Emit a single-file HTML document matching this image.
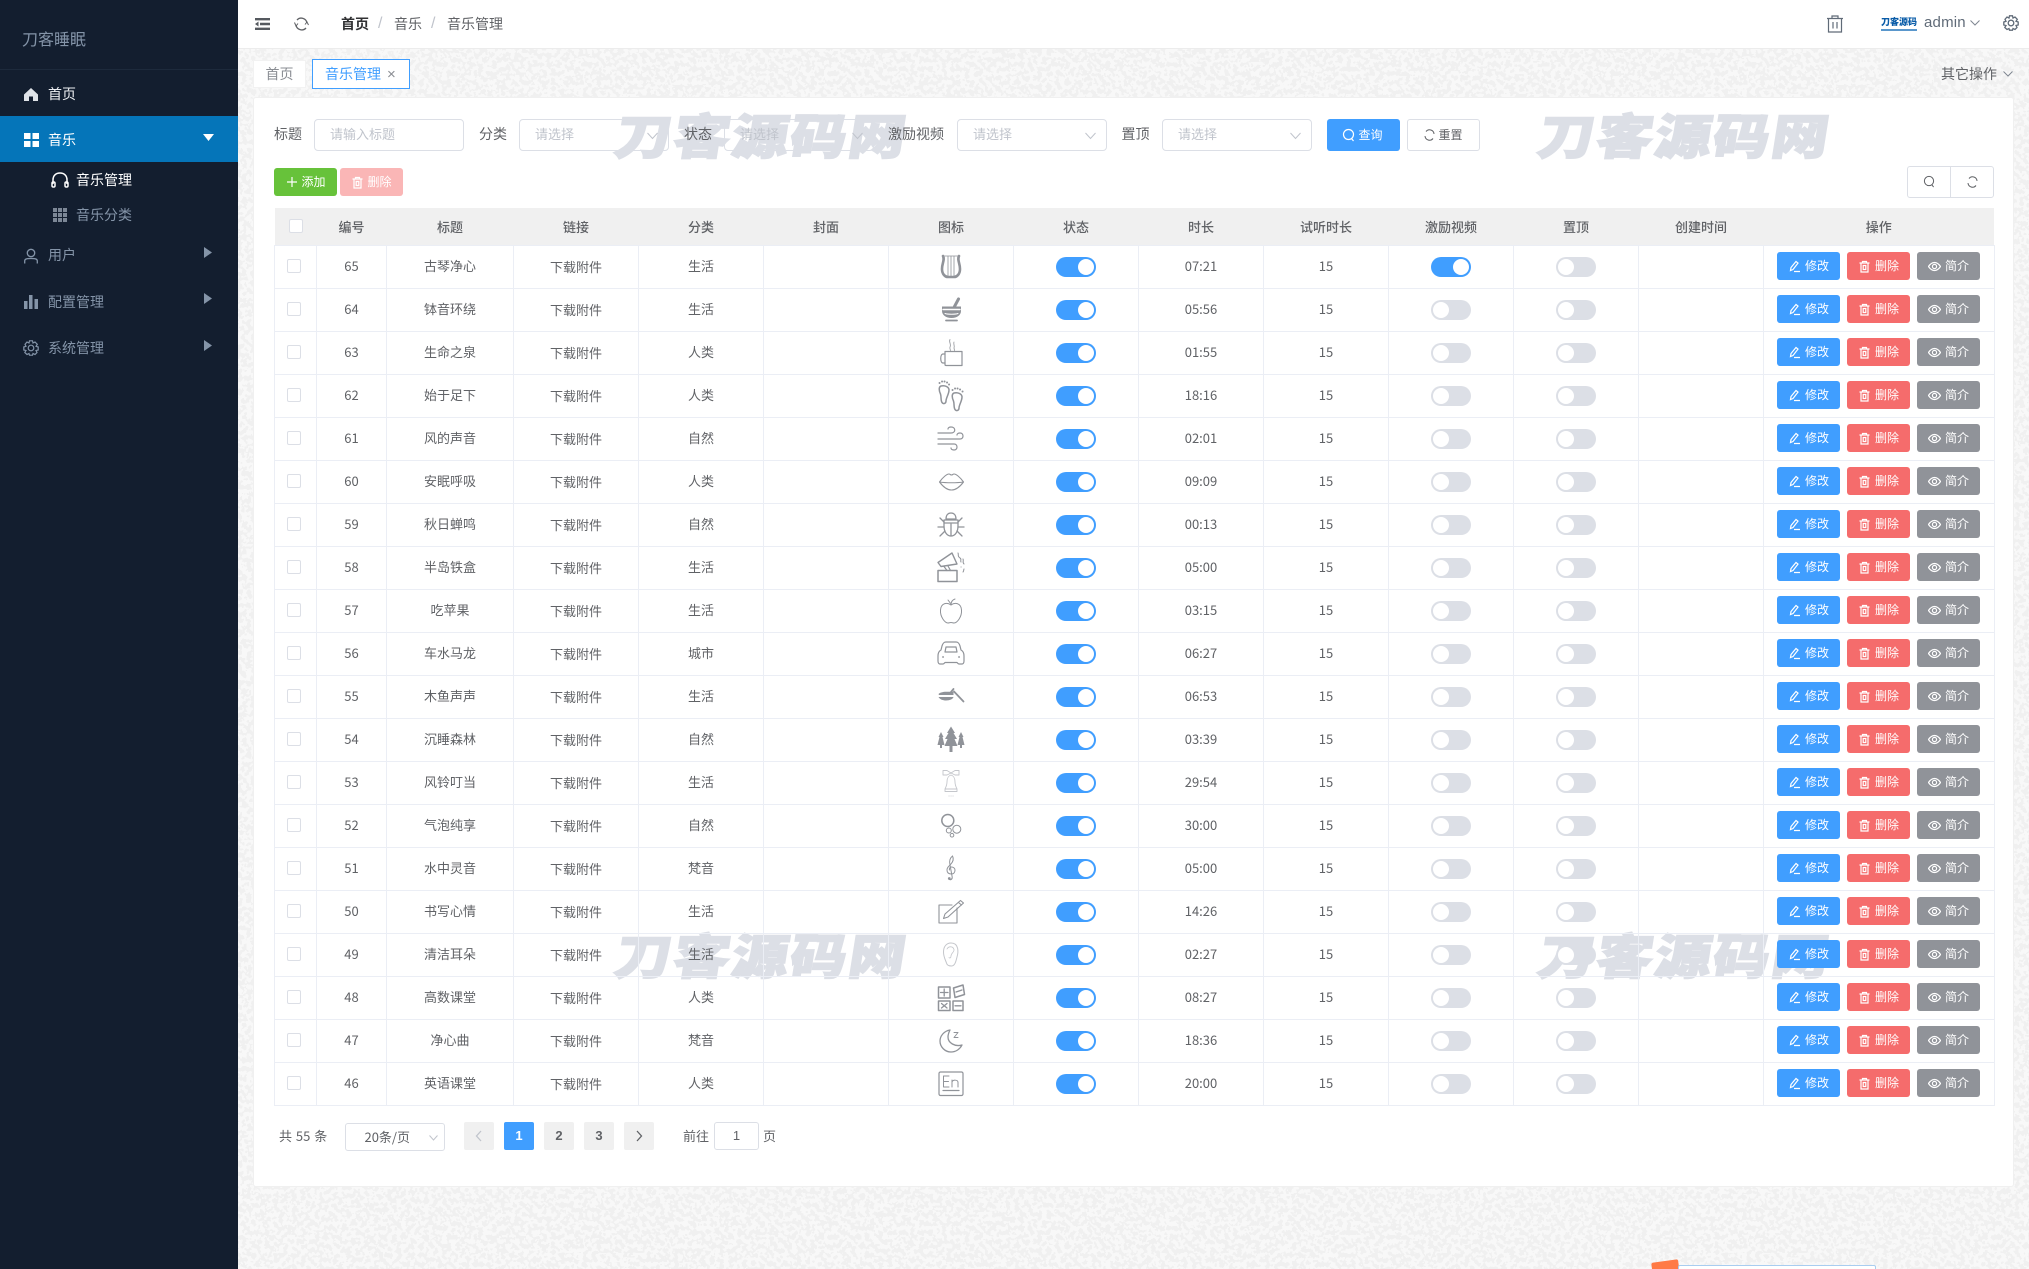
<!DOCTYPE html>
<html lang="zh-CN">
<head>
<meta charset="utf-8">
<title>刀客睡眠</title>
<style>
*{box-sizing:border-box}
html,body{margin:0;padding:0;width:2029px;height:1269px;overflow:hidden;background:#f6f6f6;font-family:"Liberation Sans","Noto Sans CJK SC",sans-serif;color:#606266}
symbol{overflow:visible}
#wrap{position:absolute;left:0;top:0;width:2029px;height:1269px;overflow:hidden}
.a{position:absolute}
#noise{position:absolute;left:238px;top:49px;width:1791px;height:1220px}
#side{position:absolute;left:0;top:0;width:238px;height:1269px;background:#131e2f;color:#8494a8;font-size:14px}
#side .t{position:absolute;white-space:nowrap;line-height:20px}
#side svg{position:absolute}
#top{position:absolute;left:238px;top:0;width:1791px;height:49px;background:#fff;border-bottom:1px solid #ececec}
.cr{position:absolute;top:14px;font-size:14px;line-height:20px;white-space:nowrap;color:#606266}
#tab1{position:absolute;left:253px;top:60px;width:53px;height:28px;background:#fff;border:1px solid #f2f2f2;font-size:14px;line-height:27px;text-align:center;color:#8a8d93}
#tab2{position:absolute;left:312px;top:59px;width:98px;height:30px;background:#fff;border:1px solid #409eff;font-size:14px;line-height:29px;padding-left:12px;color:#409eff;white-space:nowrap}
#card{position:absolute;left:253px;top:97px;width:1761px;height:1090px;background:#fff;border:1px solid #f0f0f0;border-radius:3px}
.wm{position:absolute;width:300px;height:56px;font-family:"Noto Sans CJK SC",sans-serif;font-weight:900;font-size:48px;line-height:56px;letter-spacing:1.500px;color:#dcdfe6;-webkit-text-stroke:1.500px #dcdfe6;transform-origin:0 50%;transform:skewX(-9deg) scaleX(1.18);white-space:nowrap}
.lb{position:absolute;top:124px;font-size:14px;line-height:20px;white-space:nowrap;color:#606266}
.inp{position:absolute;top:119px;height:32px;width:149.500px;background:transparent;border:1px solid #dcdfe6;border-radius:4px;font-size:13px;line-height:30px;padding-left:15px;color:#c0c4cc;white-space:nowrap}
.inp svg{position:absolute;right:10px;top:10px}
.btn{position:absolute;font-size:12px;border-radius:3px;white-space:nowrap;text-align:center}
table{position:absolute;left:274px;top:208px;width:1719.500px;border-collapse:collapse;table-layout:fixed;font-family:"Noto Sans CJK SC","Liberation Sans",sans-serif;font-size:13px;color:#606266}
th{height:37px;padding:0;background:#f0f0f0;font-weight:500;font-size:13px;color:#606266;text-align:center}
td{height:43px;padding:0 0 2px;border:1px solid #ebeef5;text-align:center;line-height:20px}
td>i,td>svg,.o div{position:relative;top:1px}
.c{display:block;width:14px;height:14px;margin-left:12px;margin-top:-1px;border:1px solid #dcdfe6;border-radius:2px;background:#fff}
.d{padding-top:2px}
.s{display:block;position:relative;width:40px;height:20px;margin:1px auto 0;border-radius:10px;background:#dcdfe6}
.s:after{content:"";position:absolute;left:2px;top:2px;width:16px;height:16px;border-radius:50%;background:#fff}
.s.on{background:#409eff}
.s.on:after{left:22px}
.ic{display:block;width:28px;height:28px;margin:0 auto;overflow:visible;fill:none;stroke:#909399;stroke-width:1.200;stroke-linecap:round;stroke-linejoin:round}
.o{padding-left:13px}
.o div{display:flex;gap:7px;margin-top:-1px}
.o a{display:flex;align-items:center;justify-content:center;gap:4px;width:63px;height:28px;border-radius:3px;color:#fff;font-size:12px;white-space:nowrap}
.o svg{width:13px;height:13px;fill:none;stroke:#fff;stroke-width:1.200}
.bl{background:#409eff}.rd{background:#f56c6c}.gy{background:#909399}
.pg{position:absolute;top:1122px;width:30px;height:28px;background:#f0f0f0;border-radius:2px;font-size:13px;font-weight:700;line-height:28px;text-align:center;color:#606266}
.nt{font-family:"Noto Sans CJK SC","Liberation Sans",sans-serif}
</style>
</head>
<body>
<div id="wrap">

<svg id="noise" viewBox="0 0 1791 1220" preserveAspectRatio="none">
<filter id="nf" x="0" y="0" width="100%" height="100%" color-interpolation-filters="sRGB">
<feTurbulence type="fractalNoise" baseFrequency="0.22" numOctaves="2" seed="7"/>
<feColorMatrix values="1 0 0 0 0 1 0 0 0 0 1 0 0 0 0 0 0 0 0 1"/>
<feComponentTransfer><feFuncR type="discrete" tableValues="0.945 0.945 0.976 0.976"/><feFuncG type="discrete" tableValues="0.945 0.945 0.976 0.976"/><feFuncB type="discrete" tableValues="0.945 0.945 0.976 0.976"/></feComponentTransfer>
</filter>
<rect width="1791" height="1220" filter="url(#nf)"/>
</svg>

<svg width="0" height="0" style="position:absolute">
<defs>
<symbol id="e" viewBox="0 0 13 13"><path d="M2.500 10.500l.5-3L8 1.500l2 1.600L5 9.500zM6 11.500h6"/></symbol>
<symbol id="x" viewBox="0 0 13 13"><path d="M1.500 3h10M4.500 3V1.500h4V3M3 3v9h7V3M5.200 5.500v4h2.600v-4z"/></symbol>
<symbol id="v" viewBox="0 0 13 13"><path d="M.5 6.500C2.500 3.500 4.500 2.500 6.500 2.500S10.500 3.500 12.500 6.500C10.500 9.500 8.500 10.500 6.500 10.500S2.500 9.500.5 6.500z"/><circle cx="6.500" cy="6.500" r="2.100"/></symbol>
<symbol id="i1" viewBox="0 0 28 28"><path d="M6 3C8 7 5 10 5 16C5 21 8 24 11 24H17C20 24 23 21 23 16C23 10 20 7 22 3" stroke-width="2.600"/><path d="M6 3H22M11 3V23M14 3V23M17 3V23" stroke-width=".8"/></symbol>
<symbol id="i2" viewBox="0 0 28 28"><path d="M21.500 3L17.500 10.500" stroke-width="3"/><path d="M5 10.500H24V15C24 19 20 22 14.500 22C9 22 5 19 5 15Z" fill="#909399" stroke="none"/><path d="M6 13.500H23" stroke="#fff" stroke-width="1.500"/><path d="M8 17.500C11 18.500 18 18.500 21 17.500" stroke="#fff" stroke-width="1"/><path d="M9 24.500H20" stroke-width="1.800"/></symbol>
<symbol id="i3" viewBox="0 0 28 28"><path d="M8 12.500H25V26.500H9C8.500 26.500 8 26 8 25.500Z"/><path d="M8 15H6C3 15 3 24 6 24H8"/><path d="M13 0.500C11.500 3 14.500 5 13 8C12.500 9 13 10 13.500 11.500M17 3C16 5 18 6.500 17 9L17.500 11.500" stroke-width=".8"/></symbol>
<symbol id="i4" viewBox="0 0 28 28"><path d="M4 4C1.500 5 2 9 3.500 12C4.500 15 3.500 18 5 20.500C6.500 22.500 9 21.500 9 19C9 16 12 12 12 8C12 5 8 3 4 4Z" stroke-width="1.500"/><path d="M17 11C14.500 12 15 16 16.500 19C17.500 22 16.500 25 18 27.500C19.500 29.500 22 28.500 22 26C22 23 25 19 25 15C25 12 21 10 17 11Z" stroke-width="1.500"/><path d="M2.500 1h.1M5 -.5h.1M7.500 -.5h.1M10 .5h.1M12 2.500h.1M15.500 8h.1M18 6.500h.1M20.500 6.500h.1M23 7.500h.1M25.500 9.500h.1" stroke-width="1.900"/></symbol>
<symbol id="i5" viewBox="0 0 28 28"><path d="M1 8H14C19 8 19 2 14 2C12 2 11 3 11 4"/><path d="M1 14H23C27 14 27 8 23 8C21 8 20 9 20 10"/><path d="M1 19H17C21 19 21 25 17 25C15 25 14 24 14 23"/></symbol>
<symbol id="i6" viewBox="0 0 28 28"><path d="M2.500 14C6 9 10 6 12 6C13 6 13.500 7 14.500 7C15.500 7 16 6 17 6C19 6 23 9 26.500 14C22 20 18 22 14.500 22C11 22 7 20 2.500 14Z" stroke-width="1.100"/><path d="M2.500 14C9 15 20 15 26.500 14" stroke-width="1.100"/></symbol>
<symbol id="i7" viewBox="0 0 28 28"><path d="M9 8C9 4 11 2 14 2C17 2 19 4 19 8Z" stroke-width="1.300"/><path d="M7 9H21V15C21 21 18 25 14 25C10 25 7 21 7 15Z" stroke-width="1.300"/><path d="M14 13V25M7 12H21M7 11L3 7M21 11L25 7M7 16H1M21 16H27M8 20L3 25M20 20L25 25" stroke-width="1.300"/></symbol>
<symbol id="i8" viewBox="0 0 28 28"><path d="M1 16.500H20V27.500H1Z" stroke-width="1.500"/><path d="M1 8.500L15 -1L20 10L4 12.500Z" stroke-width="1.400"/><path d="M7 12.500L10 16.500M11 12L13.500 16.500" stroke-width="1.200"/><path d="M21 -1C22 1 20 2 23 4C25 5 23 7 24 8M26 5C27 7 25 8 27 10M24 13h.1M27 15C26.500 16 27 17 26 18" stroke-width="1"/></symbol>
<symbol id="i9" viewBox="0 0 28 28"><path d="M14 8C10 5 4 6 3.500 13C3 20 8 26 11 26C12 26 13 25.500 14 25.500C15 25.500 16 26 17 26C20 26 25 20 24.500 13C24 6 18 5 14 8Z" stroke-width="1"/><path d="M14 8C14 5 15 3 18 2M11 3L14 7" stroke-width="1"/></symbol>
<symbol id="i10" viewBox="0 0 28 28"><path d="M9 2H19C21 2 22 3 23 6L24 10C26 11 27 13 27 16V21C27 23 26 24 25 24H22C21 24 20.500 23 20 22.500H8C7.500 23 7 24 6 24H3C2 24 1 23 1 21V16C1 13 2 11 4 10L5 6C6 3 7 2 9 2Z" stroke-width="1.200"/><path d="M8 12L9 7H19L20 12Z" stroke-width="1.200"/><path d="M6 17h.1M22 17h.1" stroke-width="1.800"/></symbol>
<symbol id="i11" viewBox="0 0 28 28"><path d="M1.500 11C3 9.500 6 8.700 9 8.700H16.500V12H2ZM2 14H16.500C16 16 13 17.500 9 17.500C6 17.500 3 16.500 1.500 14Z" fill="#909399" stroke="none"/><path d="M17 8.500L26.500 18.500" stroke-width="1.800"/><path d="M14 9L16.500 6" stroke-width="1.800"/></symbol>
<symbol id="i12" viewBox="0 0 28 28"><path d="M14 .5L18 7H16.500L20 13H17.500L20.500 20H15.500V26H12.500V20H7.500L10.500 13H8L11.500 7H10ZM4 6L6.500 11H5.500L7.500 19H5V22H3V19H.5L2.500 11H1.500ZM24 6L26.500 11H25.500L27.500 19H25V22H23V19H20.500L22.500 11H21.500Z" fill="#909399" stroke="none"/></symbol>
<symbol id="i13" viewBox="0 0 28 28"><path d="M14 4L10 1.500H6V6H10ZM14 4L18 1.500H22V6H18ZM14 6C11 7 10 9 10 13C10 16 9 18 8 20H20C19 18 18 16 18 13C18 9 17 7 14 6ZM8 20V22.500H20V20M12 27h.1M14 27h.1M16 27h.1" stroke="#c4c6cb" stroke-width=".9"/></symbol>
<symbol id="i14" viewBox="0 0 28 28"><circle cx="10.800" cy="8.500" r="6" stroke-width="1.500"/><circle cx="19.800" cy="17.200" r="4" stroke-width="1"/><circle cx="11.800" cy="18.500" r="2.500" stroke-width="1"/><circle cx="15" cy="23.200" r="1.800" stroke-width="1"/></symbol>
<symbol id="i15" viewBox="0 0 28 28"><path d="M15.500 1C13 3 12 6 13 10L15.200 22C15.500 24.500 13 25.500 12 24" stroke-width="1"/><path d="M15.500 1C17 4 16 7 13.500 9.500C11 12 10 13 10 15C10 18 12 19 14.500 19C17 19 18 17 18 15C18 13 16 12 14.500 12C13 12 12 13.500 12.500 15" stroke-width="1"/><circle cx="12.300" cy="23.500" r="1.400" fill="#909399" stroke="none"/></symbol>
<symbol id="i16" viewBox="0 0 28 28"><path d="M20 10V25H2V7H15" stroke-width="1.100"/><path d="M23.500 2.500L26.500 5L11 19L6.500 20.500L8 16ZM21.500 4.500L24.500 7" stroke-width="1.100"/></symbol>
<symbol id="i17" viewBox="0 0 28 28"><path d="M14 2C9 2 6.500 6 6.500 11C6.500 16 8.500 19 9.500 22C10 24.500 12.500 25 14.500 25C18 25 19 20 20 16C21.500 11 22 2 14 2Z" stroke="#c4c6cb" stroke-width="1"/><path d="M10 8C11.500 5 16 5 17 8.500C17.500 11 14 12 14 15C14 17 12.500 17.500 12 16.500" stroke="#c4c6cb" stroke-width=".8"/></symbol>
<symbol id="i18" viewBox="0 0 28 28"><path d="M1.500 3H13V14H1.500ZM1.500 17H13V26.500H1.500ZM16 17H26V26.500H16ZM16.500 4L26 1L27.500 10.500L18 13.500Z" stroke-width="1.500"/><path d="M7.200 5V12M3.500 8.500H11M19 8L25 6M4.500 19.500L10 24M10 19.500L4.500 24M18 21.800H24" stroke-width="1.300"/></symbol>
<symbol id="i19" viewBox="0 0 28 28"><path d="M13 3C7 4 3 9 3 14C3 20 8 25 14 25C19 25 23 22 25 18C18 20 11 16 11 10C11 7 12 5 13 3Z" stroke-width="1.300"/><path d="M17 5.500H21L17 10.500H21" stroke-width="1"/></symbol>
<symbol id="i20" viewBox="0 0 28 28"><rect x="2" y="2" width="24" height="23.500" rx="1.500" stroke-width="1.200"/><path d="M6 20.500H22" stroke-width="1.200"/><path d="M12 6H6.500V17H12M6.500 11.500H11.500M15 17V10M15 12C16 9.500 21 9.500 21 12.500V17" stroke-width="1"/></symbol>
</defs>
</svg>

<div id="side">
<div class="t" style="left:22px;top:30px;font-size:16px;line-height:22px">刀客睡眠</div>
<div class="a" style="left:0;top:69px;width:238px;height:1px;background:#1d2a3c"></div>
<svg style="left:24px;top:88px" width="14" height="13" viewBox="0 0 14 13"><path d="M7 0L14 6.500V13H9V8.500H5V13H0V6.500Z" fill="#dfe3e8"/></svg>
<div class="t" style="left:48px;top:84px;color:#eef0f3">首页</div>
<div class="a" style="left:0;top:116px;width:238px;height:46px;background:#0575b9"></div>
<svg style="left:24px;top:133px" width="15" height="14" viewBox="0 0 15 14"><path d="M0 0H6.500V6H0ZM8.500 0H15V6H8.500ZM0 8H6.500V14H0ZM8.500 8H15V14H8.500Z" fill="#fff"/></svg>
<div class="t" style="left:48px;top:130px;color:#fff">音乐</div>
<svg style="left:203px;top:134px" width="11" height="7" viewBox="0 0 11 7"><path d="M0 0H11L5.500 7Z" fill="#fff"/></svg>
<svg style="left:51px;top:172px" width="18" height="16" viewBox="0 0 18 16" fill="none" stroke="#fff" stroke-width="1.500"><path d="M2 12V8C2 3.500 5 1 9 1S16 3.500 16 8V12"/><rect x="1" y="10" width="3" height="5" rx="1.300"/><rect x="14" y="10" width="3" height="5" rx="1.300"/></svg>
<div class="t" style="left:76px;top:170px;color:#fff">音乐管理</div>
<svg style="left:53px;top:208px" width="14" height="14" viewBox="0 0 14 14" fill="#7c8796"><path d="M0 0h4v4H0zM5 0h4v4H5zM10 0h4v4h-4zM0 5h4v4H0zM5 5h4v4H5zM10 5h4v4h-4zM0 10h4v4H0zM5 10h4v4H5zM10 10h4v4h-4z"/></svg>
<div class="t" style="left:76px;top:205px">音乐分类</div>
<svg style="left:24px;top:248px" width="14" height="16" viewBox="0 0 14 16" fill="none" stroke="#8494a8" stroke-width="1.300"><circle cx="7" cy="5" r="3.700"/><path d="M.7 15.500V13C.7 11 2.500 10.500 7 10.500S13.300 11 13.300 13V15.500"/></svg>
<div class="t" style="left:48px;top:245px">用户</div>
<svg style="left:204px;top:247px" width="8" height="11" viewBox="0 0 8 11"><path d="M0 0L8 5.500L0 11Z" fill="#8494a8"/></svg>
<svg style="left:24px;top:295px" width="14" height="14" viewBox="0 0 14 14" fill="#8494a8"><path d="M0 6h3.500v8H0zM5 0h3.500v14H5zM10.500 4H14v10h-3.500z"/></svg>
<div class="t" style="left:48px;top:292px">配置管理</div>
<svg style="left:204px;top:293px" width="8" height="11" viewBox="0 0 8 11"><path d="M0 0L8 5.500L0 11Z" fill="#8494a8"/></svg>
<svg style="left:23px;top:340px" width="16" height="16" viewBox="0 0 16 16" fill="none" stroke="#8494a8" stroke-width="1.200"><path d="M6.500 .8H9.500L10 3L12 2L14.300 4.300L13 6.300L15.200 7V10L13 10.500L14 12.500L12 14.500L10 13.500L9.500 15.200H6.500L6 13.500L4 14.500L1.800 12.500L3 10.500L.8 10V7L3 6.300L2 4.300L4 2L6 3Z"/><circle cx="8" cy="8" r="2.800"/></svg>
<div class="t" style="left:48px;top:338px">系统管理</div>
<svg style="left:204px;top:340px" width="8" height="11" viewBox="0 0 8 11"><path d="M0 0L8 5.500L0 11Z" fill="#8494a8"/></svg>
</div>

<div id="top"></div>
<svg class="a" style="left:255px;top:18px" width="15" height="12" viewBox="0 0 15 12" fill="#55595f"><path d="M0 0h15v2.400H0zM5 4.800h10v2.400H5zM0 9.600h15V12H0zM0 6l3.500-2.500v5z"/></svg>
<svg class="a" style="left:294px;top:17px" width="15" height="14" viewBox="0 0 15 14" fill="none" stroke="#606266" stroke-width="1.300"><path d="M2 8A5.800 5.800 0 0 0 12 11M13 6A5.800 5.800 0 0 0 3 3"/><path d="M.5 5.500L2 9L4 6.500M14.500 8L13 5L11 7.500" stroke-width="1"/></svg>
<div class="cr" style="left:341px;font-weight:700;color:#303133">首页</div>
<div class="cr" style="left:378px;color:#c0c4cc;font-size:16px">/</div>
<div class="cr" style="left:394px">音乐</div>
<div class="cr" style="left:431px;color:#c0c4cc;font-size:16px">/</div>
<div class="cr" style="left:447px">音乐管理</div>
<svg class="a" style="left:1827px;top:15px" width="16" height="18" viewBox="0 0 16 18" fill="none" stroke="#606b78" stroke-width="1.200"><path d="M0 3.500H16M5 3.500V1H11V3.500M1.500 3.500V17H14.500V3.500M6 7V13.500M10 7V13.500"/></svg>
<div class="a" style="left:1881px;top:16px;width:36px;height:11px;font-family:'Noto Sans CJK SC',sans-serif;font-size:9px;line-height:11px;font-weight:900;color:#0a5ca8;white-space:nowrap;letter-spacing:0">刀客源码</div>
<div class="a" style="left:1881px;top:28.500px;width:36px;height:2px;background:#5a97cc"></div>
<div class="a" style="left:1924px;top:13px;font-size:15px;line-height:20px;color:#606b78;letter-spacing:.2px">admin</div>
<svg class="a" style="left:1970px;top:20px" width="10" height="6" viewBox="0 0 10 6" fill="none" stroke="#7f8691"><path d="M.5.5L5 5L9.500.5"/></svg>
<svg class="a" style="left:2003px;top:15px" width="16" height="16" viewBox="0 0 16 16" fill="none" stroke="#606b78" stroke-width="1.300"><path d="M6.500 .8H9.500L10 3L12 2L14.300 4.300L13 6.300L15.200 7V10L13 10.500L14 12.500L12 14.500L10 13.500L9.500 15.200H6.500L6 13.500L4 14.500L1.800 12.500L3 10.500L.8 10V7L3 6.300L2 4.300L4 2L6 3Z"/><circle cx="8" cy="8" r="2.800"/></svg>

<div id="tab1">首页</div>
<div id="tab2">音乐管理<span style="margin-left:6px;font-size:15px;color:#8a8d93">×</span></div>
<div class="a" style="left:1941px;top:64px;font-size:14px;line-height:20px;color:#606266;white-space:nowrap">其它操作</div>
<svg class="a" style="left:2003px;top:71px" width="10" height="6" viewBox="0 0 10 6" fill="none" stroke="#7f8691"><path d="M.5.5L5 5L9.500.5"/></svg>

<div id="card"></div>

<div class="wm" style="left:616px;top:105px">刀客源码网</div>
<div class="wm" style="left:1539px;top:105px">刀客源码网</div>
<div class="wm" style="left:616px;top:925px">刀客源码网</div>
<div class="wm" style="left:1539px;top:925px">刀客源码网</div>

<div class="lb" style="left:274px">标题</div>
<div class="inp" style="left:314px">请输入标题</div>
<div class="lb" style="left:479px">分类</div>
<div class="inp" style="left:519px">请选择<svg width="11" height="12" viewBox="0 0 11 12" fill="none" stroke="#c0c4cc"><path d="M.5 3L5.500 8.500L10.500 3"/></svg></div>
<div class="lb" style="left:684px">状态</div>
<div class="inp" style="left:724px">请选择<svg width="11" height="12" viewBox="0 0 11 12" fill="none" stroke="#c0c4cc"><path d="M.5 3L5.500 8.500L10.500 3"/></svg></div>
<div class="lb" style="left:888px">激励视频</div>
<div class="inp" style="left:957px">请选择<svg width="11" height="12" viewBox="0 0 11 12" fill="none" stroke="#c0c4cc"><path d="M.5 3L5.500 8.500L10.500 3"/></svg></div>
<div class="lb" style="left:1121.500px">置顶</div>
<div class="inp" style="left:1162px">请选择<svg width="11" height="12" viewBox="0 0 11 12" fill="none" stroke="#c0c4cc"><path d="M.5 3L5.500 8.500L10.500 3"/></svg></div>

<div class="btn" style="left:1327px;top:119px;width:73px;height:32px;background:#409eff;color:#fff;line-height:32px;padding-left:14px">查询<svg class="a" style="left:15px;top:9px" width="13" height="14" viewBox="0 0 13 14" fill="none" stroke="#fff" stroke-width="1.200"><circle cx="6.500" cy="6.500" r="5"/><path d="M9.500 10.500L11.500 13"/></svg></div>
<div class="btn" style="left:1407px;top:119px;width:73px;height:32px;background:#fff;border:1px solid #dcdfe6;line-height:30px;padding-left:14px;color:#606266">重置<svg class="a" style="left:16px;top:9px" width="11" height="12" viewBox="0 0 11 12" fill="none" stroke="#606266"><path d="M1 7A4.500 4.500 0 0 0 9 9.500M10 5A4.500 4.500 0 0 0 2 2.500"/></svg></div>

<div class="btn" style="left:274px;top:168px;width:63px;height:28px;background:#67c23a;color:#fff;line-height:28px;padding-left:16px">添加<svg class="a" style="left:12px;top:8px" width="12" height="12" viewBox="0 0 12 12" stroke="#fff" stroke-width="1.200"><path d="M6 1V11M1 6H11"/></svg></div>
<div class="btn" style="left:340px;top:168px;width:63px;height:28px;background:#fab6b6;color:#fff;line-height:28px;padding-left:16px">删除<svg class="a" style="left:11px;top:8px" width="13" height="13" fill="none" stroke="#fff" stroke-width="1.200"><use href="#x"/></svg></div>

<div class="a" style="left:1907px;top:166px;width:87px;height:32px;background:#fff;border:1px solid #dcdfe6;border-radius:3px"></div>
<div class="a" style="left:1950px;top:166px;width:1px;height:32px;background:#dcdfe6"></div>
<svg class="a" style="left:1923px;top:175px" width="12" height="13" viewBox="0 0 13 14" fill="none" stroke="#606266" stroke-width="1.100"><circle cx="6.500" cy="6.500" r="5"/><path d="M9.500 10.500L11.500 13"/></svg>
<svg class="a" style="left:1967px;top:176px" width="11" height="12" viewBox="0 0 11 12" fill="none" stroke="#606266"><path d="M1 7A4.500 4.500 0 0 0 9 9.500M10 5A4.500 4.500 0 0 0 2 2.500"/></svg>

<table>
<colgroup><col style="width:42px"><col style="width:70px"><col style="width:127px"><col style="width:125px"><col style="width:125px"><col style="width:125px"><col style="width:125px"><col style="width:125px"><col style="width:125px"><col style="width:125px"><col style="width:125px"><col style="width:125px"><col style="width:125px"><col style="width:230.500px"></colgroup>
<tr><th><i class="c" style="margin-left:14px;margin-top:0"></i></th><th>编号</th><th>标题</th><th>链接</th><th>分类</th><th>封面</th><th>图标</th><th>状态</th><th>时长</th><th>试听时长</th><th>激励视频</th><th>置顶</th><th>创建时间</th><th>操作</th></tr>
<tr><td><i class="c"></i></td><td>65</td><td>古琴净心</td><td class="d">下载附件</td><td>生活</td><td></td><td><svg class="ic"><use href="#i1"/></svg></td><td><i class="s on"></i></td><td>07:21</td><td>15</td><td><i class="s on"></i></td><td><i class="s"></i></td><td></td><td class="o"><div><a class="bl"><svg><use href="#e"/></svg>修改</a><a class="rd"><svg><use href="#x"/></svg>删除</a><a class="gy"><svg><use href="#v"/></svg>简介</a></div></td></tr>
<tr><td><i class="c"></i></td><td>64</td><td>钵音环绕</td><td class="d">下载附件</td><td>生活</td><td></td><td><svg class="ic"><use href="#i2"/></svg></td><td><i class="s on"></i></td><td>05:56</td><td>15</td><td><i class="s"></i></td><td><i class="s"></i></td><td></td><td class="o"><div><a class="bl"><svg><use href="#e"/></svg>修改</a><a class="rd"><svg><use href="#x"/></svg>删除</a><a class="gy"><svg><use href="#v"/></svg>简介</a></div></td></tr>
<tr><td><i class="c"></i></td><td>63</td><td>生命之泉</td><td class="d">下载附件</td><td>人类</td><td></td><td><svg class="ic"><use href="#i3"/></svg></td><td><i class="s on"></i></td><td>01:55</td><td>15</td><td><i class="s"></i></td><td><i class="s"></i></td><td></td><td class="o"><div><a class="bl"><svg><use href="#e"/></svg>修改</a><a class="rd"><svg><use href="#x"/></svg>删除</a><a class="gy"><svg><use href="#v"/></svg>简介</a></div></td></tr>
<tr><td><i class="c"></i></td><td>62</td><td>始于足下</td><td class="d">下载附件</td><td>人类</td><td></td><td><svg class="ic"><use href="#i4"/></svg></td><td><i class="s on"></i></td><td>18:16</td><td>15</td><td><i class="s"></i></td><td><i class="s"></i></td><td></td><td class="o"><div><a class="bl"><svg><use href="#e"/></svg>修改</a><a class="rd"><svg><use href="#x"/></svg>删除</a><a class="gy"><svg><use href="#v"/></svg>简介</a></div></td></tr>
<tr><td><i class="c"></i></td><td>61</td><td>风的声音</td><td class="d">下载附件</td><td>自然</td><td></td><td><svg class="ic"><use href="#i5"/></svg></td><td><i class="s on"></i></td><td>02:01</td><td>15</td><td><i class="s"></i></td><td><i class="s"></i></td><td></td><td class="o"><div><a class="bl"><svg><use href="#e"/></svg>修改</a><a class="rd"><svg><use href="#x"/></svg>删除</a><a class="gy"><svg><use href="#v"/></svg>简介</a></div></td></tr>
<tr><td><i class="c"></i></td><td>60</td><td>安眠呼吸</td><td class="d">下载附件</td><td>人类</td><td></td><td><svg class="ic"><use href="#i6"/></svg></td><td><i class="s on"></i></td><td>09:09</td><td>15</td><td><i class="s"></i></td><td><i class="s"></i></td><td></td><td class="o"><div><a class="bl"><svg><use href="#e"/></svg>修改</a><a class="rd"><svg><use href="#x"/></svg>删除</a><a class="gy"><svg><use href="#v"/></svg>简介</a></div></td></tr>
<tr><td><i class="c"></i></td><td>59</td><td>秋日蝉鸣</td><td class="d">下载附件</td><td>自然</td><td></td><td><svg class="ic"><use href="#i7"/></svg></td><td><i class="s on"></i></td><td>00:13</td><td>15</td><td><i class="s"></i></td><td><i class="s"></i></td><td></td><td class="o"><div><a class="bl"><svg><use href="#e"/></svg>修改</a><a class="rd"><svg><use href="#x"/></svg>删除</a><a class="gy"><svg><use href="#v"/></svg>简介</a></div></td></tr>
<tr><td><i class="c"></i></td><td>58</td><td>半岛铁盒</td><td class="d">下载附件</td><td>生活</td><td></td><td><svg class="ic"><use href="#i8"/></svg></td><td><i class="s on"></i></td><td>05:00</td><td>15</td><td><i class="s"></i></td><td><i class="s"></i></td><td></td><td class="o"><div><a class="bl"><svg><use href="#e"/></svg>修改</a><a class="rd"><svg><use href="#x"/></svg>删除</a><a class="gy"><svg><use href="#v"/></svg>简介</a></div></td></tr>
<tr><td><i class="c"></i></td><td>57</td><td>吃苹果</td><td class="d">下载附件</td><td>生活</td><td></td><td><svg class="ic"><use href="#i9"/></svg></td><td><i class="s on"></i></td><td>03:15</td><td>15</td><td><i class="s"></i></td><td><i class="s"></i></td><td></td><td class="o"><div><a class="bl"><svg><use href="#e"/></svg>修改</a><a class="rd"><svg><use href="#x"/></svg>删除</a><a class="gy"><svg><use href="#v"/></svg>简介</a></div></td></tr>
<tr><td><i class="c"></i></td><td>56</td><td>车水马龙</td><td class="d">下载附件</td><td>城市</td><td></td><td><svg class="ic"><use href="#i10"/></svg></td><td><i class="s on"></i></td><td>06:27</td><td>15</td><td><i class="s"></i></td><td><i class="s"></i></td><td></td><td class="o"><div><a class="bl"><svg><use href="#e"/></svg>修改</a><a class="rd"><svg><use href="#x"/></svg>删除</a><a class="gy"><svg><use href="#v"/></svg>简介</a></div></td></tr>
<tr><td><i class="c"></i></td><td>55</td><td>木鱼声声</td><td class="d">下载附件</td><td>生活</td><td></td><td><svg class="ic"><use href="#i11"/></svg></td><td><i class="s on"></i></td><td>06:53</td><td>15</td><td><i class="s"></i></td><td><i class="s"></i></td><td></td><td class="o"><div><a class="bl"><svg><use href="#e"/></svg>修改</a><a class="rd"><svg><use href="#x"/></svg>删除</a><a class="gy"><svg><use href="#v"/></svg>简介</a></div></td></tr>
<tr><td><i class="c"></i></td><td>54</td><td>沉睡森林</td><td class="d">下载附件</td><td>自然</td><td></td><td><svg class="ic"><use href="#i12"/></svg></td><td><i class="s on"></i></td><td>03:39</td><td>15</td><td><i class="s"></i></td><td><i class="s"></i></td><td></td><td class="o"><div><a class="bl"><svg><use href="#e"/></svg>修改</a><a class="rd"><svg><use href="#x"/></svg>删除</a><a class="gy"><svg><use href="#v"/></svg>简介</a></div></td></tr>
<tr><td><i class="c"></i></td><td>53</td><td>风铃叮当</td><td class="d">下载附件</td><td>生活</td><td></td><td><svg class="ic"><use href="#i13"/></svg></td><td><i class="s on"></i></td><td>29:54</td><td>15</td><td><i class="s"></i></td><td><i class="s"></i></td><td></td><td class="o"><div><a class="bl"><svg><use href="#e"/></svg>修改</a><a class="rd"><svg><use href="#x"/></svg>删除</a><a class="gy"><svg><use href="#v"/></svg>简介</a></div></td></tr>
<tr><td><i class="c"></i></td><td>52</td><td>气泡纯享</td><td class="d">下载附件</td><td>自然</td><td></td><td><svg class="ic"><use href="#i14"/></svg></td><td><i class="s on"></i></td><td>30:00</td><td>15</td><td><i class="s"></i></td><td><i class="s"></i></td><td></td><td class="o"><div><a class="bl"><svg><use href="#e"/></svg>修改</a><a class="rd"><svg><use href="#x"/></svg>删除</a><a class="gy"><svg><use href="#v"/></svg>简介</a></div></td></tr>
<tr><td><i class="c"></i></td><td>51</td><td>水中灵音</td><td class="d">下载附件</td><td>梵音</td><td></td><td><svg class="ic"><use href="#i15"/></svg></td><td><i class="s on"></i></td><td>05:00</td><td>15</td><td><i class="s"></i></td><td><i class="s"></i></td><td></td><td class="o"><div><a class="bl"><svg><use href="#e"/></svg>修改</a><a class="rd"><svg><use href="#x"/></svg>删除</a><a class="gy"><svg><use href="#v"/></svg>简介</a></div></td></tr>
<tr><td><i class="c"></i></td><td>50</td><td>书写心情</td><td class="d">下载附件</td><td>生活</td><td></td><td><svg class="ic"><use href="#i16"/></svg></td><td><i class="s on"></i></td><td>14:26</td><td>15</td><td><i class="s"></i></td><td><i class="s"></i></td><td></td><td class="o"><div><a class="bl"><svg><use href="#e"/></svg>修改</a><a class="rd"><svg><use href="#x"/></svg>删除</a><a class="gy"><svg><use href="#v"/></svg>简介</a></div></td></tr>
<tr><td><i class="c"></i></td><td>49</td><td>清洁耳朵</td><td class="d">下载附件</td><td>生活</td><td></td><td><svg class="ic"><use href="#i17"/></svg></td><td><i class="s on"></i></td><td>02:27</td><td>15</td><td><i class="s"></i></td><td><i class="s"></i></td><td></td><td class="o"><div><a class="bl"><svg><use href="#e"/></svg>修改</a><a class="rd"><svg><use href="#x"/></svg>删除</a><a class="gy"><svg><use href="#v"/></svg>简介</a></div></td></tr>
<tr><td><i class="c"></i></td><td>48</td><td>高数课堂</td><td class="d">下载附件</td><td>人类</td><td></td><td><svg class="ic"><use href="#i18"/></svg></td><td><i class="s on"></i></td><td>08:27</td><td>15</td><td><i class="s"></i></td><td><i class="s"></i></td><td></td><td class="o"><div><a class="bl"><svg><use href="#e"/></svg>修改</a><a class="rd"><svg><use href="#x"/></svg>删除</a><a class="gy"><svg><use href="#v"/></svg>简介</a></div></td></tr>
<tr><td><i class="c"></i></td><td>47</td><td>净心曲</td><td class="d">下载附件</td><td>梵音</td><td></td><td><svg class="ic"><use href="#i19"/></svg></td><td><i class="s on"></i></td><td>18:36</td><td>15</td><td><i class="s"></i></td><td><i class="s"></i></td><td></td><td class="o"><div><a class="bl"><svg><use href="#e"/></svg>修改</a><a class="rd"><svg><use href="#x"/></svg>删除</a><a class="gy"><svg><use href="#v"/></svg>简介</a></div></td></tr>
<tr><td><i class="c"></i></td><td>46</td><td>英语课堂</td><td class="d">下载附件</td><td>人类</td><td></td><td><svg class="ic"><use href="#i20"/></svg></td><td><i class="s on"></i></td><td>20:00</td><td>15</td><td><i class="s"></i></td><td><i class="s"></i></td><td></td><td class="o"><div><a class="bl"><svg><use href="#e"/></svg>修改</a><a class="rd"><svg><use href="#x"/></svg>删除</a><a class="gy"><svg><use href="#v"/></svg>简介</a></div></td></tr>
</table>

<div class="a nt" style="left:279px;top:1125.500px;font-size:13px;line-height:20px;white-space:nowrap;color:#606266;word-spacing:1px">共 55 条</div>
<div class="a" style="left:344.500px;top:1123px;width:100px;height:28px;border:1px solid #dcdfe6;border-radius:3px;background:#fff;font-size:13px;line-height:25px;padding-left:19px;color:#606266;white-space:nowrap"><span class="nt">20条/页</span><svg class="a" style="left:83px;top:11px" width="9" height="6" viewBox="0 0 9 6" fill="none" stroke="#c0c4cc"><path d="M.5.5L4.500 5L8.500.5"/></svg></div>
<div class="pg" style="left:464px"><svg width="8" height="12" viewBox="0 0 8 12" fill="none" stroke="#c0c4cc" stroke-width="1.300" style="margin-top:8px;display:block;margin-left:11px"><path d="M6 1L1.500 6L6 11"/></svg></div>
<div class="pg" style="left:504px;background:#409eff;color:#fff">1</div>
<div class="pg" style="left:544px">2</div>
<div class="pg" style="left:584px">3</div>
<div class="pg" style="left:624px"><svg width="8" height="12" viewBox="0 0 8 12" fill="none" stroke="#606266" stroke-width="1.300" style="margin-top:8px;display:block;margin-left:11px"><path d="M2 1L6.500 6L2 11"/></svg></div>
<div class="a" style="left:683px;top:1127px;font-size:13px;line-height:20px;white-space:nowrap;color:#606266">前往</div>
<div class="a" style="left:714px;top:1122px;width:45px;height:28px;border:1px solid #dcdfe6;border-radius:3px;background:#fff;font-size:13px;line-height:26px;text-align:center;color:#606266">1</div>
<div class="a" style="left:763px;top:1127px;font-size:13px;line-height:20px;color:#606266">页</div>

<div class="a" style="left:1652px;top:1261px;width:27px;height:14px;background:#ff7a45;border-radius:2px;transform:rotate(-8deg)"></div>
<div class="a" style="left:1678px;top:1265px;width:198px;height:10px;background:#fff;border:1px solid #a9cdf0;border-radius:2px"></div>

</div>
</body>
</html>
